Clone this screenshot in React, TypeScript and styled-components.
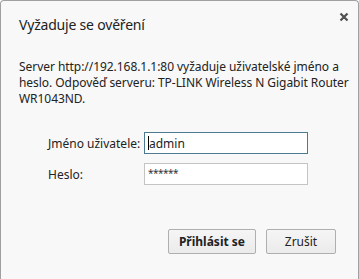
import styled, { createGlobalStyle } from "styled-components";

const GlobalStyle = createGlobalStyle`
  html, body {
    margin: 0;
    padding: 0;
    background: #ffffff;
  }
  body {
    font-family: "Noto Sans", "Open Sans", sans-serif;
  }
`;

const Dialog = styled.div`
  box-sizing: border-box;
  width: 359px;
  height: 279px;
  background: #f8f8f8;
  border: 1px solid #a0a0a0;
  border-bottom: none;
  border-radius: 4px 4px 0 0;
  padding: 0 0 0 18px;
  display: flex;
  flex-direction: column;
  color: #222;
  font-size: 12px;
`;

const Header = styled.div`
  display: flex;
  justify-content: space-between;
  align-items: flex-start;
  height: 50px;
`;

const Title = styled.h1`
  margin: 14px 0 0 0;
  font-size: 14px;
  letter-spacing: -0.2px;
  font-weight: normal;
  line-height: 20px;
  color: #222;
`;

const CloseButton = styled.button`
  border: none;
  background: none;
  padding: 0;
  margin: 11px 9px 0 0;
  width: 10px;
  height: 10px;
  display: flex;
`;

const Message = styled.p`
  margin: 8px 0 0 0;
  line-height: 16px;
  white-space: nowrap;
  letter-spacing: -0.05px;
`;

const Form = styled.div`
  display: grid;
  grid-template-columns: 96px 164px;
  justify-content: start;
  row-gap: 9px;
  align-items: center;
  margin: 25px 0 0 29px;
`;

const Label = styled.label`
  font-size: 12px;
  white-space: nowrap;
`;

const Input = styled.div<{ $focused?: boolean }>`
  box-sizing: border-box;
  width: 164px;
  height: 22px;
  background: #fff;
  border: 1px solid ${(p) => (p.$focused ? "#4c7a8e" : "#c4c4c4")};
  display: flex;
  align-items: center;
  padding-left: 3px;
  font-size: 12px;
`;

const Masked = styled.span`
  font-size: 10px;
  color: #333;
  letter-spacing: -0.5px;
  margin-top: -2px;
`;

const Caret = styled.span`
  display: inline-block;
  width: 1px;
  height: 14px;
  background: #000;
`;

const Buttons = styled.div`
  display: flex;
  justify-content: flex-end;
  gap: 10px;
  margin: 44px 22px 0 0;
`;

const Button = styled.button<{ $primary?: boolean }>`
  box-sizing: border-box;
  height: 25px;
  min-width: 70px;
  padding: 0 10px;
  font-family: inherit;
  font-size: 12px;
  font-weight: ${(p) => (p.$primary ? "bold" : "normal")};
  color: #222;
  background: linear-gradient(#f5f5f5, #ebebeb);
  border: 1px solid #afafaf;
  border-radius: 2px;
`;

export default function App() {
  return (
    <>
      <GlobalStyle />
      <Dialog>
        <Header>
          <Title>Vyžaduje se ověření</Title>
          <CloseButton aria-label="Zavřít">
            <svg width="10" height="10" viewBox="0 0 10 10">
              <path d="M1.5 1.5 L8.5 8.5 M8.5 1.5 L1.5 8.5" stroke="#505050" strokeWidth="2.2" />
            </svg>
          </CloseButton>
        </Header>
        <Message>
          Server http://192.168.1.1:80 vyžaduje uživatelské jméno a
          <br />
          heslo. Odpověď serveru: TP-LINK Wireless N Gigabit Router
          <br />
          WR1043ND.
        </Message>
        <Form>
          <Label>Jméno uživatele:</Label>
          <Input $focused>
            <Caret />
            admin
          </Input>
          <Label>Heslo:</Label>
          <Input>
            <Masked>******</Masked>
          </Input>
        </Form>
        <Buttons>
          <Button $primary>Přihlásit se</Button>
          <Button>Zrušit</Button>
        </Buttons>
      </Dialog>
    </>
  );
}
